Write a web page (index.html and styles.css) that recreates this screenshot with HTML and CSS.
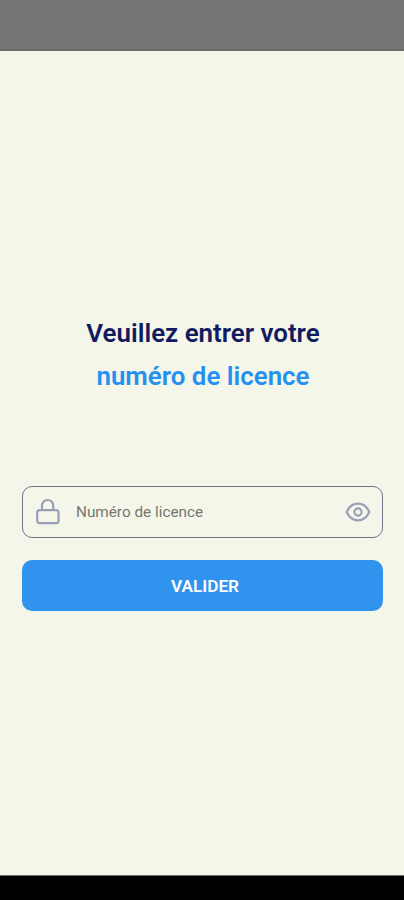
FILE: index.html
```html
<!DOCTYPE html>
<html lang="fr">
<head>
<meta charset="utf-8">
<title>Numéro de licence</title>
<link rel="stylesheet" href="styles.css">
</head>
<body>
<div class="screen">
  <div class="status-bar"></div>
  <main class="content">
    <h1 class="title"><span class="title-lead">Veuillez entrer votre</span><span class="title-accent">numéro de licence</span></h1>
    <form class="form">
      <label class="field">
        <svg class="lock" viewBox="0 0 26 28" aria-hidden="true"><rect x="2.200" y="12.200" width="21.300" height="13" rx="2.500"/><path d="M7 12V7.600a5.600 5.600 0 0 1 11.200 0V12"/></svg>
        <span class="placeholder">Numéro de licence</span>
        <svg class="eye" viewBox="0 0 26 20" aria-hidden="true"><path d="M1.700 10C4 4.800 8 1.700 13 1.700S22 4.800 24.300 10C22 15.200 18 18.300 13 18.300S4 15.200 1.700 10Z"/><circle cx="13" cy="10" r="3.600"/></svg>
      </label>
      <button class="submit" type="button">VALIDER</button>
    </form>
  </main>
  <div class="nav-bar"></div>
</div>
</body>
</html>
```
FILE: styles.css
```css
* { box-sizing: border-box; }
body { margin: 0; font-family: Roboto, sans-serif; }
.screen { display: flex; flex-direction: column; height: 900px; background: #f4f6e9; }
.status-bar { height: 51px; background: #757575; border-bottom: 2px solid #6b6b6b; }
.content { flex: 1; padding: 261px 21px 0 22px; }
.title { margin: 0; padding-left: 1px; font-size: 25.900px; line-height: 43px; font-weight: 600; text-align: center; }
.title span { display: block; }
.title-lead { color: #121b60; }
.title-accent { color: #2491f0; }
.form { margin-top: 88px; display: flex; flex-direction: column; gap: 22px; }
.field { height: 52px; display: flex; align-items: center; padding: 0 11px 0 12px; border: 1px solid #73758f; border-radius: 10px; }
.lock { width: 26px; height: 28px; }
.eye { width: 26px; height: 20px; margin-left: auto; }
.lock, .eye { fill: none; stroke: #9a9fb8; stroke-width: 2.200; stroke-linejoin: round; }
.placeholder { margin-left: 15px; font-size: 15.300px; color: #74766f; }
.submit { height: 51px; padding: 1px 0 0 5px; border: 0; border-radius: 10px; background: #3094ee; color: #fff; font: 600 17.200px Roboto, sans-serif; }
.nav-bar { height: 25px; background: #000; border-top: 1px solid #6c6e68; }
```
